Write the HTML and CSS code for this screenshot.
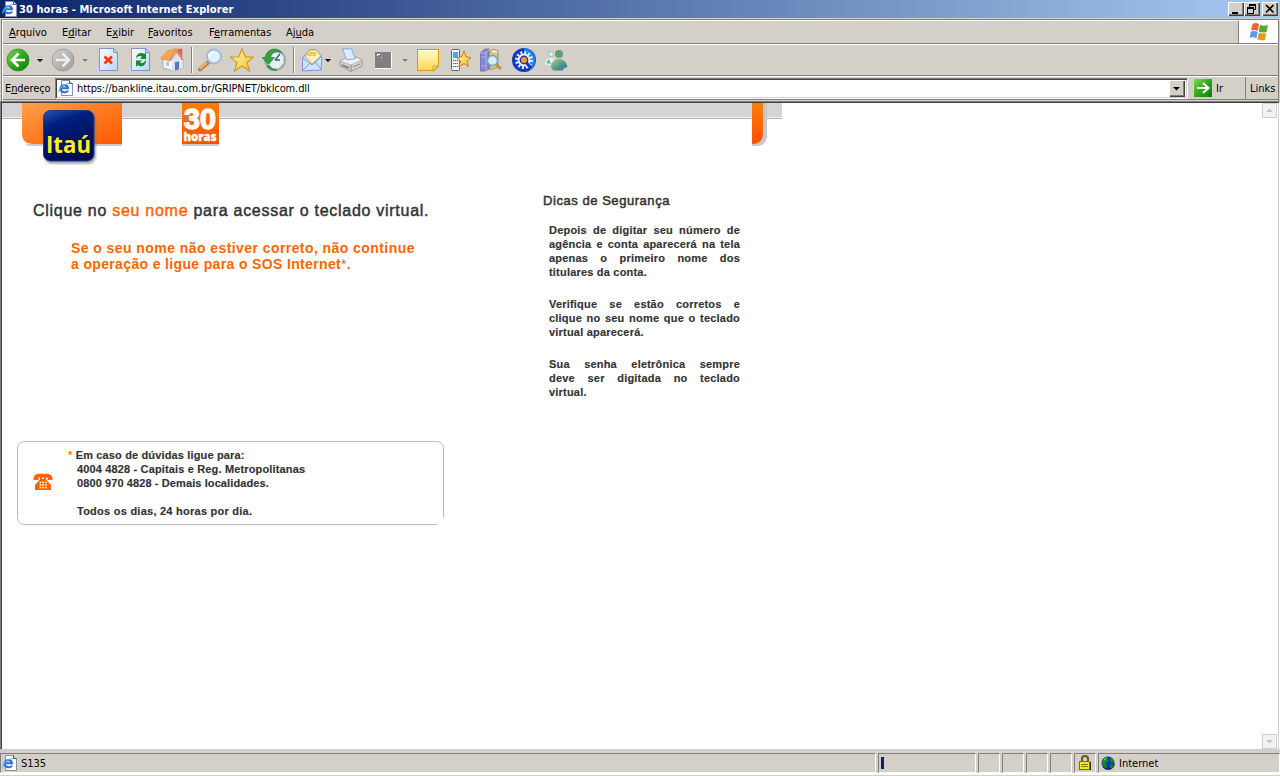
FILE: index.html
```html
<!DOCTYPE html>
<html lang="pt-BR">
<head>
<meta charset="utf-8">
<title>30 horas - Microsoft Internet Explorer</title>
<link rel="stylesheet" href="styles.css">
</head>
<body>
<svg class="defs" width="0" height="0">
  <defs>
    <linearGradient id="green" x1="0" y1="0" x2="1" y2="1"><stop offset="0" stop-color="#7fd858"/><stop offset=".5" stop-color="#2fa81c"/><stop offset="1" stop-color="#0a7d08"/></linearGradient>
    <linearGradient id="grey" x1="0" y1="0" x2="1" y2="1"><stop offset="0" stop-color="#d0d0ce"/><stop offset="1" stop-color="#9c9c9c"/></linearGradient>
    <linearGradient id="sheet" x1="0" y1="0" x2="1" y2="1"><stop offset="0" stop-color="#fff"/><stop offset="1" stop-color="#b8d4fa"/></linearGradient>
    <linearGradient id="note" x1="0" y1="0" x2="0" y2="1"><stop offset="0" stop-color="#fffdd8"/><stop offset="1" stop-color="#fcd64c"/></linearGradient>
    <linearGradient id="star" x1="0" y1="0" x2="1" y2="1"><stop offset="0" stop-color="#fffac0"/><stop offset="1" stop-color="#fbbd18"/></linearGradient>
    <linearGradient id="person" x1="0" y1="0" x2="1" y2="1"><stop offset="0" stop-color="#a8d488"/><stop offset=".55" stop-color="#4f9a88"/><stop offset="1" stop-color="#3868b0"/></linearGradient>
    <symbol id="iepage" viewBox="0 0 16 16">
      <path d="M3.500.500h8l3 3v12h-11z" fill="#fff" stroke="#8a90a8"/><path d="M11.500.500v3h3" fill="#dde6f4" stroke="#555"/>
      <path d="M10 10.500C9 13.200 2.600 13 2.700 8.400 2.900 4.300 9.700 4.300 10 8.300H4" fill="none" stroke="#2a6cd4" stroke-width="2"/>
      <path d="M.8 12.500C0 9 6 3.500 12 3.200" fill="none" stroke="#62aef0" stroke-width="1.100"/>
    </symbol>
  </defs>
</svg>
<div class="window">
  <header class="titlebar">
    <svg class="ie" width="16" height="16"><use href="#iepage"/></svg>
    <span class="title">30 horas - Microsoft Internet Explorer</span>
    <div class="controls">
      <svg class="ctl" viewBox="0 0 16 14"><path d="M4 10h6v2H4z"/></svg>
      <svg class="ctl" viewBox="0 0 16 14"><path d="M5 2h7v2H5zM5 4h1v1H5zM11 4h1v4h-2V7h1zM3 5h7v2H3zM3 7h1v5H3zM9 7h1v5H9zM4 11h5v1H4z" shape-rendering="crispEdges"/></svg>
      <svg class="ctl close" viewBox="0 0 16 14"><path d="M4 3l7.500 7.500M11.500 3L4 10.500" stroke="#000" stroke-width="1.700"/></svg>
    </div>
  </header>

  <div class="bars">
    <nav class="menubar">
      <span class="m1"><u>A</u>rquivo</span><span class="m2">E<u>d</u>itar</span><span class="m3">E<u>x</u>ibir</span><span class="m4"><u>F</u>avoritos</span><span class="m5">F<u>e</u>rramentas</span><span class="m6">Aj<u>u</u>da</span>
      <div class="flag">
        <svg width="20" height="20" viewBox="0 0 20 20"><path d="M3.500 2q4-2 6.500.3L8.700 9Q5.500 7 2 8.600z" fill="#f06432"/><path d="M11 2.700q4 1.800 8 .3L17.500 10q-4 1.400-7.700-.4z" fill="#58a830"/><path d="M1.800 9.700q3.700-1.600 6.800.3L7.400 16.500Q4 14.300.6 16z" fill="#5a9cec"/><path d="M9.700 10.600q4 1.800 7.700.4l-1.500 7q-3.800 1-7.500-.8z" fill="#e0a010"/></svg>
      </div>
    </nav>

    <div class="toolbar">
      <svg class="icon" viewBox="0 0 24 24"><circle cx="12" cy="12" r="11" fill="url(#green)" stroke="#308020" stroke-width=".7"/><path d="M12.500 5.500L6 12l6.500 6.500M6.500 12H19" fill="none" stroke="#fff" stroke-width="2.600"/></svg>
      <svg class="drop" viewBox="0 0 6 3"><path d="M0 0h6L3 3z"/></svg>
      <svg class="icon" viewBox="0 0 24 24"><circle cx="12" cy="12" r="11" fill="url(#grey)" stroke="#8c8c8c" stroke-width=".7"/><path d="M11.500 5.500L18 12l-6.500 6.500M17.500 12H5" fill="none" stroke="#eee" stroke-width="2.600"/></svg>
      <svg class="drop" viewBox="0 0 6 3"><path d="M0 0h6L3 3z" fill="#808080"/></svg>
      <svg class="icon stop" viewBox="0 0 24 24"><path d="M2.500.500h14l4 4v18h-18z" fill="url(#sheet)" stroke="#7a96d8"/><path d="M16.500.500v4h4z" fill="#cfe0fa" stroke="#7a96d8"/><path d="M7.500 8.500l7.500 7M15 8.500l-7.500 7" stroke="#f83408" stroke-width="2.600"/></svg>
      <svg class="icon" viewBox="0 0 24 24"><path d="M2.500.500h14l4 4v18h-18z" fill="url(#sheet)" stroke="#7a96d8"/><path d="M16.500.500v4h4z" fill="#cfe0fa" stroke="#7a96d8"/><path d="M7 10.500c0-5 5-7 8.500-4.500l1.500-2V11h-6l2-2.200c-2-1.300-4-.8-6 1.700zM17 12c0 6.500-5.500 7.500-8.500 5L7 19v-6.500h6l-2 2c2 1.500 4 .5 6-2.500z" fill="#109020"/></svg>
      <svg class="icon home" viewBox="0 0 24 24"><path d="M18 1h4v8l-4-3z" fill="#d4704c" stroke="#b4603c" stroke-width=".5"/><path d="M3 11l9 1 6-7 5 7v8l-9 3-11-3z" fill="#f4f7ff" stroke="#8aa0cc" stroke-width=".8"/><path d="M12 12l5-6 6 6v8l-9 3h-2z" fill="#d8e6fb"/><path d="M15 14l4-.5V21l-4 1.500z" fill="#5875b4"/><path d="M6 14h3v4l-3-.6z" fill="#a8c8f0"/><path d="M.5 10.500L8 2.500 16.500.5 12 8l-2.500 5z" fill="#fba450" stroke="#e48434" stroke-width=".6"/><path d="M16.500 1l7 10.500-1.500 1L16 4l-6 9.500-1-1z" fill="#e8885c"/></svg>
      <i class="sep"></i>
      <svg class="icon search" viewBox="0 0 24 24"><path d="M2 21.500l8-7" stroke="#c07838" stroke-width="4" stroke-linecap="round"/><path d="M2 20.700l7-6.200" stroke="#f8b468" stroke-width="2"/><circle cx="16" cy="8.500" r="7" fill="#dff2ff" stroke="#a8b6dc" stroke-width="1.800"/><path d="M11 8q1-4 5-4" stroke="#fff" stroke-width="2" fill="none"/></svg>
      <svg class="icon" viewBox="0 0 24 24"><path d="M12 .8l3.200 8 8.300.4-6.500 5.300 2.500 8.500-7.500-5L4.500 23 7 14.500.5 9.200l8.300-.4z" fill="url(#star)" stroke="#cf9a28" stroke-width="1.200"/></svg>
      <svg class="icon" viewBox="0 0 24 24"><circle cx="13" cy="12" r="10" fill="#e4eff6" stroke="#a0aab0" stroke-width="2"/><path d="M13 12l5-6M13 12h5" stroke="#405870" stroke-width="1.300"/><path d="M21 12h1M13 20v1M19 17l1 1" stroke="#e07040"/><path d="M20 5C16-1 5-.5 3.500 9.500H0l6.500 7 6-7H8.500C10 4 14 3 20 5zM5 18c2 4 6 5 10 4-4-1-6-2-8-5z" fill="#38a040" stroke="#26824a" stroke-width=".7"/></svg>
      <i class="sep"></i>
      <svg class="icon mail" viewBox="0 0 24 24"><path d="M2.500 10L10 1.500h6L22 9l-1 13-18.500 1z" fill="#cce4ff" stroke="#7a96dc"/><path d="M5 8l5-6h6l5 6-9 8z" fill="#fff1c8" stroke="#d8a660"/><path d="M7 7h9M9 5h7" stroke="#f8b840" stroke-width="1.500"/><path d="M3 10l9 7 9-8M3 22l7-7M21 21l-6-7" fill="none" stroke="#7a96dc"/></svg>
      <svg class="drop near" viewBox="0 0 6 3"><path d="M0 0h6L3 3z"/></svg>
      <svg class="icon" viewBox="0 0 24 24"><path d="M1 13l6-3 10-1 6 3v6l-11 5.500L1 18z" fill="#d0d0d0" stroke="#8d8d8d" stroke-width=".8"/><path d="M1 13l11 4 11-5-6-3-10 1z" fill="#eee" stroke="#999" stroke-width=".6"/><path d="M3.500.8h9l4 10-9 1z" fill="#d9ecff" stroke="#84a8e4"/><path d="M12 17v6M14 19l7-3" stroke="#888"/><path d="M3 17l7 3" stroke="#787878" stroke-width="1.500"/></svg>
      <svg class="icon" viewBox="0 0 24 24"><path d="M4 4h17v17H4z" fill="#fff"/><path d="M4 4h16v16H4z" fill="#808080"/><path d="M6 6h3v1H7v1H6zM10 9h1v1h-1z" fill="#fff"/></svg>
      <svg class="drop" viewBox="0 0 6 3"><path d="M0 0h6L3 3z" fill="#808080"/></svg>
      <svg class="icon" viewBox="0 0 24 24"><path d="M1.500 1.500h21v17l-4 4h-17z" fill="url(#note)" stroke="#d99a10"/><path d="M22 18h-5v4z" fill="#fff0a0" stroke="#d99a10"/></svg>
      <svg class="icon" viewBox="0 0 24 24"><rect x="3.500" y="1.500" width="8" height="21" rx="1" fill="#f2f4fa" stroke="#59617c"/><path d="M5 4h5v6H5z" fill="#48a8ee"/><path d="M5 12.500h5M5 15.500h5M5 18.500h5" stroke="#555" stroke-dasharray="1.200 .7"/><path d="M16 3l2 6 5 .5-4 3.700 1.500 5.300-4.500-3-5 3L12.500 13 8.500 9.500l5.200-.5z" fill="url(#star)" stroke="#d07914"/></svg>
      <svg class="icon" viewBox="0 0 24 24"><path d="M0 5l5-4h4v20l-4 2H0z" fill="#8486cc" stroke="#6163ae" stroke-width=".7"/><path d="M6 5v17M0 5h6l4-4M1 9h4M1 18h4" fill="none" stroke="#b5b6e8"/><path d="M9 4l4-3 5 2v16l-8 3z" fill="#dfc480" stroke="#907a4a" stroke-width=".7"/><path d="M12 3l5 1" stroke="#fff0b0" stroke-width="2"/><path d="M16 16l5 5" stroke="#c49638" stroke-width="3"/><circle cx="12.500" cy="12.500" r="5" fill="#cfefff" stroke="#6f9fc8" stroke-width="1.300"/></svg>
      <svg class="icon" viewBox="0 0 24 24"><circle cx="12" cy="12" r="12" fill="#1238c0"/><path d="M12 0A12 12 0 0 1 18 22L12 12z" fill="#1688f0"/><circle cx="12" cy="12" r="6.500" fill="#e4f2ff"/><circle cx="12" cy="12" r="7.500" fill="none" stroke="#e4f2ff" stroke-width="3" stroke-dasharray="2 1.930"/><path d="M13 13l6 7" stroke="#1238b8" stroke-width="3"/><circle cx="12" cy="12" r="4.400" fill="#1a38b0"/><circle cx="12" cy="12" r="3" fill="#ff9828"/></svg>
      <svg class="icon" viewBox="0 0 24 24"><circle cx="7" cy="6" r="2.700" fill="#d4ecf4" stroke="#88b4b4" stroke-width=".7"/><path d="M1 16c0-4 3-6 6-6s5 2 5 7H3z" fill="#e4f4f4"/><path d="M2 15l3-4 2 5" fill="#68b878"/><circle cx="15" cy="6" r="4" fill="#5ca070"/><path d="M7 19c0-5 3-8 7-8 5 0 8 2 9.500 8l-3 1-2 2.500H9z" fill="url(#person)"/></svg>
    </div>

    <div class="addressbar">
      <label class="lab">E<u>n</u>dereço</label>
      <div class="field">
        <svg class="ie" width="16" height="16"><use href="#iepage"/></svg>
        <span class="url">https://bankline.itau.com.br/GRIPNET/bklcom.dll</span>
        <svg class="pick" viewBox="0 0 16 17"><path d="M4 7h7L7.500 10.500z"/></svg>
      </div>
      <div class="go"><svg width="18" height="18"><path d="M0 0h18v18H0z" fill="url(#green)"/><path d="M3 9h11M9 4l5.500 5L9 14" stroke="#fff" stroke-width="2" fill="none"/></svg><span>Ir</span></div>
      <div class="links">Links</div>
    </div>
  </div>

  <main class="viewport">
    <div class="page">
      <div class="banner">
        <svg class="banner-art" width="780" height="62" viewBox="2 103 780 62">
          <defs>
            <linearGradient id="or" x1="0" y1="0" x2="1" y2="1"><stop offset="0" stop-color="#ffa04c"/><stop offset=".5" stop-color="#ff7a20"/><stop offset="1" stop-color="#ff5800"/></linearGradient>
            <linearGradient id="orv" x1="0" y1="0" x2="0" y2="1"><stop offset="0" stop-color="#ff7e08"/><stop offset="1" stop-color="#ff5000"/></linearGradient>
            <linearGradient id="blue" x1="0" y1="0" x2=".35" y2="1"><stop offset="0" stop-color="#2c55b8"/><stop offset=".3" stop-color="#001f80"/><stop offset="1" stop-color="#000b50"/></linearGradient>
            <filter id="soft" x="-20%" y="-20%" width="150%" height="150%"><feGaussianBlur stdDeviation="1.200"/></filter>
          </defs>
          <path d="M2 103h780v14H2z" fill="#d4d4d4"/><path d="M2 118h780v1H2z" fill="#b4b4b4"/><path d="M2 117h780v1H2z" fill="#f0f0f0"/>
          <path d="M26 144h96v2H31q-4 0-5-2zM182 144h37v2h-37z" fill="#ccc"/>
          <path d="M22 103h100v41H33Q22 144 22 133z" fill="url(#or)"/>
          <path d="M182 103h37v41h-37z" fill="url(#orv)"/>
          <path d="M752 103h15v32q0 11-11 11h-4z" fill="#c8c8c8"/>
          <path d="M752 103h11v30q0 11-11 11z" fill="url(#orv)"/>
          <rect x="44" y="112" width="52" height="52" rx="8" fill="#777" opacity=".6" filter="url(#soft)"/>
          <rect x="43.500" y="110.500" width="50.500" height="50.500" rx="7" fill="url(#blue)" stroke="#173c90"/>
          <text class="brand" x="46" y="153" textLength="45" lengthAdjust="spacingAndGlyphs">Itaú</text>
          <text class="thirty" x="184" y="129" textLength="32" lengthAdjust="spacingAndGlyphs">30</text>
          <text class="hours" x="183.500" y="140.500" textLength="33" lengthAdjust="spacingAndGlyphs">horas</text>
        </svg>
      </div>
      <div class="columns">
        <section class="left">
          <h1 class="lead">Clique no <em>seu nome</em> para acessar o teclado virtual.</h1>
          <p class="warn"><span class="w1">Se o seu nome não estiver correto, não continue</span><br><span class="w2">a operação e ligue para o SOS Internet<span class="ast">*</span>.</span></p>
          <div class="help">
            <svg class="frame" width="427" height="84" fill="none" stroke="#bdbdbd"><path d="M420 83.500H8Q.5 83.500.5 76V8Q.5.500 8 .5H419Q426.500.500 426.500 8V77"/></svg>
            <svg class="phone" width="20" height="18" viewBox="0 0 20 18"><path d="M.5 5.500Q1 1 6 .7h8Q19 1 19.500 5.500V7h-5V4.500h-9V7h-5zM7 4h2v2h2V4h2v2.500l5 5.500v5H2v-5l5-5.500z" fill="#ff6400"/><path d="M6.500 9.500h7.500M6.500 12h7.500M6.500 14.500h7.500" stroke="#fff" stroke-width="1.300" stroke-dasharray="1.800 1"/></svg>
            <div class="help-text">
              <p class="h1"><span class="star">*</span> Em caso de dúvidas ligue para:</p>
              <p class="h2">4004 4828 - Capitais e Reg. Metropolitanas</p>
              <p class="h3">0800 970 4828 - Demais localidades.</p>
              <p class="h4">Todos os dias, 24 horas por dia.</p>
            </div>
          </div>
        </section>
        <aside class="tips">
          <h2 class="tips-title">Dicas de Segurança</h2>
          <p>Depois de digitar seu número de<br>agência e conta aparecerá na tela<br>apenas o primeiro nome dos<br><span class="t1">titulares da conta.</span></p>
          <p>Verifique se estão corretos e<br>clique no seu nome que o teclado<br><span class="t2">virtual aparecerá.</span></p>
          <p>Sua senha eletrônica sempre<br>deve ser digitada no teclado<br><span class="t3">virtual.</span></p>
        </aside>
      </div>
    </div>
    <div class="scrollbar">
      <svg class="sbtn" viewBox="0 0 13 13"><path d="M3 8h7L6.500 4.500z" fill="#c4c4c4"/></svg>
      <svg class="sbtn" viewBox="0 0 13 13"><path d="M3 5h7L6.500 8.500z" fill="#c4c4c4"/></svg>
    </div>
  </main>

  <footer class="statusbar">
    <div class="pane msg"><svg class="ie" width="16" height="16"><use href="#iepage"/></svg><span>S135</span></div>
    <div class="pane progress"><i class="chunk"></i></div>
    <div class="pane slot"></div><div class="pane slot"></div><div class="pane slot"></div><div class="pane slot"></div>
    <div class="pane lock"><svg width="14" height="16"><path d="M4 8V3.500Q4 1 7 1t3 2.500V8" fill="none" stroke="#606018" stroke-width="2"/><path d="M1 7h12v8H1z" fill="#222"/><path d="M1.500 6.500h10v8h-10z" fill="#f4f000" stroke="#706f00"/><path d="M3 9.500h7M3 11.500h7" stroke="#777900"/></svg></div>
    <div class="pane zone"><svg width="14" height="14"><circle cx="7" cy="7" r="6.500" fill="#1030d0"/><path d="M1 6q0-5 6-5.500L6 3l2 2-3 2 1 4-2 1Q1 10 1 6zM9 2q3 0 4.500 4L11 7 9 5zM9 8l4 1q-1 4-4 4z" fill="#128c18"/><path d="M3 4l3-2" stroke="#80e080"/><path d="M1.500 10.500Q4 14 8 13.400 13 12.500 13.300 8" fill="none" stroke="#222"/></svg><span>Internet</span></div>
  </footer>
</div>
</body>
</html>
```
FILE: styles.css
```css
* { box-sizing: border-box; }
body { margin: 0; background: #d4d0c8; font: 11px/13px "DejaVu Sans Condensed", "DejaVu Sans", sans-serif; color: #000; }
p, h1, h2 { margin: 0; }
svg { display: block; flex: none; }
.defs { position: absolute; }
.window { width: 1280px; height: 776px; display: flex; flex-direction: column; overflow: hidden; white-space: nowrap; }

.titlebar { height: 18px; flex: none; display: flex; align-items: center; padding: 0 2px; background: linear-gradient(90deg, #0a246a, #a6caf0); color: #fff; font-weight: bold; }
.title { margin-left: 1px; letter-spacing: .08px; }
.controls { margin-left: auto; display: flex; }
.ctl { width: 16px; height: 14px; background: #d4d0c8; box-shadow: inset 1px 1px #fff, inset -1px -1px #404040, inset -2px -2px #808080; }
.close { margin-left: 2px; }

.bars { flex: none; height: 82px; margin: 1px 1px 0; padding-left: 1px; border: solid #808080; border-width: 1px 1px 0; box-shadow: inset 1px 1px #fff; display: flex; flex-direction: column; }
.menubar { height: 23px; margin-top: 1px; display: flex; align-items: center; border-bottom: 1px solid #808080; }
.menubar span { flex: none; }
.m1 { width: 53px; margin-left: 6px; }
.m2 { width: 44px; } .m3 { width: 42px; } .m4 { width: 61px; } .m5 { width: 77px; }
.flag { margin-left: auto; width: 40px; height: 22px; background: #fff; border-left: 1px solid #808080; display: flex; align-items: center; justify-content: center; }

.toolbar { height: 32px; flex: none; border-top: 1px solid #fff; border-bottom: 1px solid #808080; display: flex; align-items: center; gap: 8px; padding-left: 3px; }
.icon { width: 24px; height: 24px; }
.drop { width: 6px; height: 3px; margin-left: -1px; }
.near { margin-left: -7px; }
.stop { margin-left: 1px; }
.home, .sep { margin-left: -1px; }
.sep { width: 2px; height: 26px; border-left: 1px solid #808080; background: #fff; }
.search, .mail { margin-left: -3px; }

.addressbar { height: 24px; flex: none; border-top: 1px solid #fff; border-bottom: 1px solid #808080; display: flex; align-items: center; padding-left: 2px; }
.lab { width: 50px; letter-spacing: -.1px; }
.field { width: 1133px; height: 21px; background: #fff; border: 1px solid; border-color: #808080 #fff #fff #808080; box-shadow: inset 1px 1px #404040, inset -1px -1px #d4d0c8; display: flex; align-items: center; padding: 0 2px; }
.url { margin-left: 3px; letter-spacing: -.12px; }
.pick { width: 16px; height: 17px; margin-left: auto; background: #d4d0c8; box-shadow: inset 1px 1px #fff, inset -1px -1px #404040, inset -2px -2px #808080; }
.go { display: flex; align-items: center; width: 58px; margin-left: 6px; }
.go span { margin-left: 4px; }
.links { height: 22px; line-height: 23px; border-left: 1px solid #808080; padding-left: 4px; margin-left: -7px; }

.viewport { height: 649px; flex: none; background: #fff; border: solid #808080; border-width: 1px 0 0 1px; border-right: 1px solid #fff; border-bottom: 1px solid #d4d0c8; box-shadow: inset 1px 1px #404040, inset -1px 0 #d4d0c8; padding: 1px 2px 0 1px; display: flex; }
.page { width: 1259px; font-family: "Liberation Sans", Arial, sans-serif; color: #333; }
.banner { height: 62px; }
.brand { font: bold 24px "Open Sans", sans-serif; fill: #ffee20; }
.thirty { font: bold 29px "Liberation Sans", sans-serif; fill: #fff; stroke: #fff; stroke-width: 1.4px; }
.hours { font: 800 12px "Open Sans", sans-serif; fill: #fff; stroke: #fff; stroke-width: .4px; }
.columns { display: flex; }
.left { width: 541px; padding-top: 36px; }
.lead { margin-left: 31px; font-size: 16px; line-height: 20px; font-weight: normal; letter-spacing: .72px; -webkit-text-stroke: .45px; }
.lead em { font-style: normal; color: #ff6600; }
.warn { margin: 19px 0 0 69px; font-size: 14px; line-height: 16px; font-weight: bold; color: #ff6600; letter-spacing: .43px; }
.w2 { letter-spacing: .35px; }
.ast { font-weight: normal; }
.help { margin: 169px 0 0 15px; width: 427px; height: 84px; display: flex; position: relative; }
.frame { position: absolute; left: 0; top: 0; }
.phone { margin: 32px 0 0 16px; }
.help-text { padding: 7px 0 0 24px; font-size: 11px; line-height: 14px; font-weight: bold; letter-spacing: .15px; -webkit-text-stroke: .15px; }
.h1 { margin-left: -9px; }
.h3 { letter-spacing: .1px; }
.help-text .star { color: #ff6600; font-weight: normal; }
.h4 { margin-top: 14px; letter-spacing: .25px; }
.tips { width: 197px; padding-top: 28px; }
.tips-title { font-size: 13px; line-height: 16px; font-weight: normal; margin-bottom: 14px; letter-spacing: .55px; -webkit-text-stroke: .5px; }
.tips p { margin: 0 0 18px 6px; width: 191px; font-size: 11px; line-height: 14px; font-weight: bold; white-space: normal; text-align: justify; text-align-last: justify; letter-spacing: .2px; -webkit-text-stroke: .15px; }
.tips p span { display: inline-block; text-align-last: left; }
.scrollbar { width: 15px; margin-left: auto; display: flex; flex-direction: column; justify-content: space-between; }
.sbtn { width: 15px; height: 15px; border: 1px solid #d0d0d0; background: #f2f2f2; }

.statusbar { height: 25px; flex: none; padding-top: 2px; border-top: 1px solid #d4d0c8; border-bottom: 2px solid #fff; display: flex; gap: 2px; }
.pane { border: 1px solid; border-color: #808080 #fff #fff #808080; height: 20px; display: flex; align-items: center; flex: none; }
.msg { width: 876px; padding-left: 1px; }
.msg span { margin-left: 3px; }
.progress { width: 98px; padding-left: 2px; }
.chunk { width: 3px; height: 12px; background: #0a246a; }
.slot { width: 22px; }
.lock { width: 22px; justify-content: center; }
.zone { width: 182px; padding-left: 2px; }
.zone span { margin-left: 4px; }
```
